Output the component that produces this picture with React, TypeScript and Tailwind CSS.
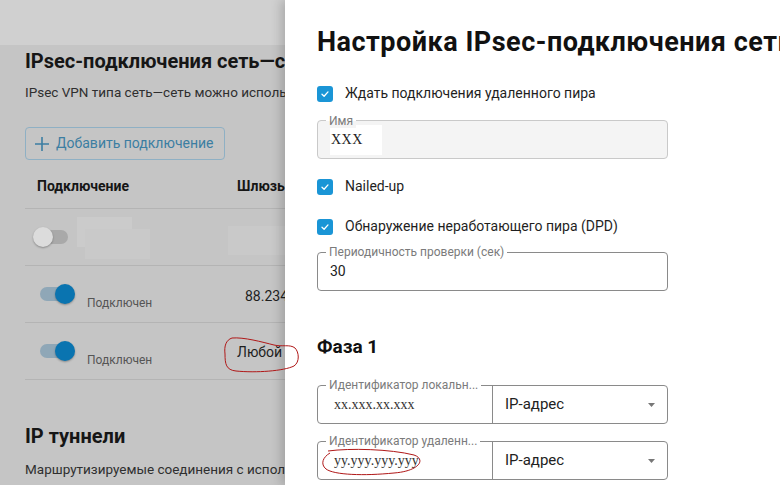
import React from 'react';

const font = { fontFamily: 'Roboto, "Noto Sans", sans-serif' };

function Toggle({ on }: { on: boolean }) {
  return (
    <span className="relative inline-block h-[20px] w-[38px] shrink-0">
      <span
        className={`absolute left-[3px] top-[3px] h-[14px] w-[32px] rounded-full ${on ? 'bg-[#8fa7b7]' : 'bg-[#a9a9a9]'}`}
      />
      <span
        className={`absolute top-0 h-[20px] w-[20px] rounded-full shadow-[0_1px_2px_rgba(0,0,0,0.3)] ${on ? 'right-0 bg-[#0a74b0]' : 'left-0 bg-[#dcdcdc]'}`}
      />
    </span>
  );
}

function Check({ label }: { label: string }) {
  return (
    <div className="flex items-center gap-[12px]">
      <span className="flex h-[16px] w-[16px] items-center justify-center rounded-[3px] bg-[#1a95d6]">
        <svg width="10" height="10" viewBox="0 0 10 10" fill="none">
          <path d="M2 5.2 4.1 7.2 8 2.9" stroke="white" strokeWidth="1.3" strokeLinecap="round" strokeLinejoin="round" />
        </svg>
      </span>
      <span className="text-[14px] text-[#1f1f1f]">{label}</span>
    </div>
  );
}

function Legend({ text }: { text: string }) {
  return (
    <span className="absolute -top-[8px] left-[8px] bg-white px-[3px] text-[12px] leading-[14px] text-[#7b7b7b]">
      {text}
    </span>
  );
}

function IdField({ label, value }: { label: string; value: string }) {
  return (
    <div className="relative flex h-[39px] w-[351px] rounded-[4px] border border-[#8a8a8a]">
      <Legend text={label} />
      <div className="flex w-[175px] items-center border-r border-[#8a8a8a] pl-[16px]">
        <span className="text-[14px] text-[#333]" style={{ fontFamily: '"Liberation Serif", serif' }}>
          {value}
        </span>
      </div>
      <div className="flex flex-1 items-center justify-between pl-[12px] pr-[12px]">
        <span className="text-[15px] text-[#222]">IP-адрес</span>
        <svg width="7" height="4" viewBox="0 0 7 4">
          <path d="M0 0h7L3.5 4z" fill="#777" />
        </svg>
      </div>
    </div>
  );
}

export default function App() {
  return (
    <div className="relative h-[485px] w-[780px] overflow-hidden bg-[#c5c5c5]" style={font}>
      {/* Background page, dimmed by the drawer backdrop */}
      <div className="h-[45px] bg-[#d0d0d0]" />
      <div className="px-[25px]">
        <h1 className="mt-[3px] whitespace-nowrap text-[20px] font-bold leading-[26px] text-[#161616]">
          IPsec-подключения сеть—сеть
        </h1>
        <p className="mt-[10px] whitespace-nowrap text-[13.5px] leading-[16px] text-[#2f2f2f]">
          IPsec VPN типа сеть—сеть можно использовать
        </p>
        <button className="mt-[27px] flex h-[33px] w-[200px] items-center gap-[7px] rounded-[4px] border border-[#8fb0c4] pl-[9px] text-[14px] text-[#3c7ea2]">
          <svg width="14" height="14" viewBox="0 0 14 14">
            <path d="M7 0v14M0 7h14" stroke="#3c7ea2" strokeWidth="1.6" />
          </svg>
          Добавить подключение
        </button>
        <div className="mt-[5px] w-[300px]">
          <div className="flex h-[44px] items-center border-b border-[#b4b4b4] text-[14px] font-bold text-[#161616]">
            <span className="w-[212px] pl-[12px]">Подключение</span>
            <span>Шлюзы</span>
          </div>
          <div className="relative flex h-[57px] items-center border-b border-[#b4b4b4] pl-[8px]">
            <Toggle on={false} />
            <span className="absolute left-[52px] top-[8px] h-[30px] w-[55px] bg-[#cbcbcb]" />
            <span className="absolute left-[60px] top-[20px] h-[30px] w-[65px] bg-[#c9c9c9]" />
            <span className="absolute left-[203px] top-[17px] h-[29px] w-[60px] bg-[#c9c9c9]" />
          </div>
          <div className="relative flex h-[57px] items-center border-b border-[#b4b4b4] pl-[12px]">
            <Toggle on />
            <span className="absolute left-[62px] top-[28px] text-[12px] text-[#555]">Подключен</span>
            <span className="absolute left-[220px] top-[20px] text-[14px] text-[#1f1f1f]">88.234</span>
          </div>
          <div className="relative flex h-[57px] items-center border-b border-[#b4b4b4] pl-[12px]">
            <Toggle on />
            <span className="absolute left-[62px] top-[28px] text-[12px] text-[#555]">Подключен</span>
            <span className="absolute left-[212px] top-[19px] text-[14px] text-[#1f1f1f]">Любой</span>
          </div>
        </div>
        <h2 className="mt-[43px] text-[20px] font-bold leading-[26px] text-[#161616]">IP туннели</h2>
        <p className="mt-[10px] whitespace-nowrap text-[13.5px] text-[#2f2f2f]">
          Маршрутизируемые соединения с использованием
        </p>
      </div>

      {/* Drawer */}
      <div className="absolute bottom-0 left-[285px] top-0 w-[495px] overflow-hidden bg-white pl-[32px] shadow-[-4px_0_10px_rgba(0,0,0,0.18)]">
        <h1 className="mt-[26px] whitespace-nowrap text-[27px] font-bold leading-[32px] tracking-[0.5px] text-[#111]">
          Настройка IPsec-подключения сеть
        </h1>
        <div className="mt-[25px]">
          <Check label="Ждать подключения удаленного пира" />
        </div>
        <div className="relative mt-[16px] flex h-[39px] w-[351px] items-center rounded-[4px] border border-[#c9c9c9] bg-[#f4f4f4] pl-[12px]">
          <span className="absolute -top-[7px] left-[8px] bg-[linear-gradient(to_bottom,white_50%,#f4f4f4_50%)] px-[3px] text-[12px] leading-[14px] text-[#7b7b7b]">
            Имя
          </span>
          <span className="flex h-[30px] w-[52px] items-center bg-white pl-[1px] text-[14px] tracking-[0.5px] text-[#222]" style={{ fontFamily: '"Liberation Serif", serif' }}>
            XXX
          </span>
        </div>
        <div className="mt-[17px]">
          <Check label="Nailed-up" />
        </div>
        <div className="mt-[19px]">
          <Check label="Обнаружение неработающего пира (DPD)" />
        </div>
        <div className="relative mt-[15px] flex h-[39px] w-[351px] items-center rounded-[4px] border border-[#8a8a8a] pl-[12px]">
          <Legend text="Периодичность проверки (сек)" />
          <span className="text-[14px] text-[#222]">30</span>
        </div>
        <h2 className="mt-[44px] text-[19px] font-bold leading-[24px] text-[#111]">Фаза 1</h2>
        <div className="mt-[26px]">
          <IdField label="Идентификатор локальн..." value="xx.xxx.xx.xxx" />
        </div>
        <div className="mt-[17px]">
          <IdField label="Идентификатор удаленн..." value="yy.yyy.yyy.yyy" />
        </div>
      </div>

      {/* Hand-drawn red annotations on top of the screenshot */}
      <svg className="pointer-events-none absolute left-[222px] top-[334px]" width="80" height="42" viewBox="0 0 80 42" fill="none">
        <path
          d="M10 4 C 4 6, 2 12, 3 20 C 3 30, 4 36, 14 37 C 34 39, 62 37, 72 32 C 78 28, 77 18, 73 14 C 68 10, 60 13, 52 11 C 40 8, 22 3, 10 4"
          stroke="#b01818"
          strokeWidth="1"
        />
      </svg>
      <svg className="pointer-events-none absolute left-[320px] top-[447px]" width="106" height="30" viewBox="0 0 106 30" fill="none">
        <path
          d="M8 4 C 30 1, 70 2, 94 8 C 106 12, 100 24, 74 26 C 44 29, 14 28, 6 22 C 0 17, 3 10, 10 6"
          stroke="#b01818"
          strokeWidth="1"
        />
      </svg>
    </div>
  );
}
